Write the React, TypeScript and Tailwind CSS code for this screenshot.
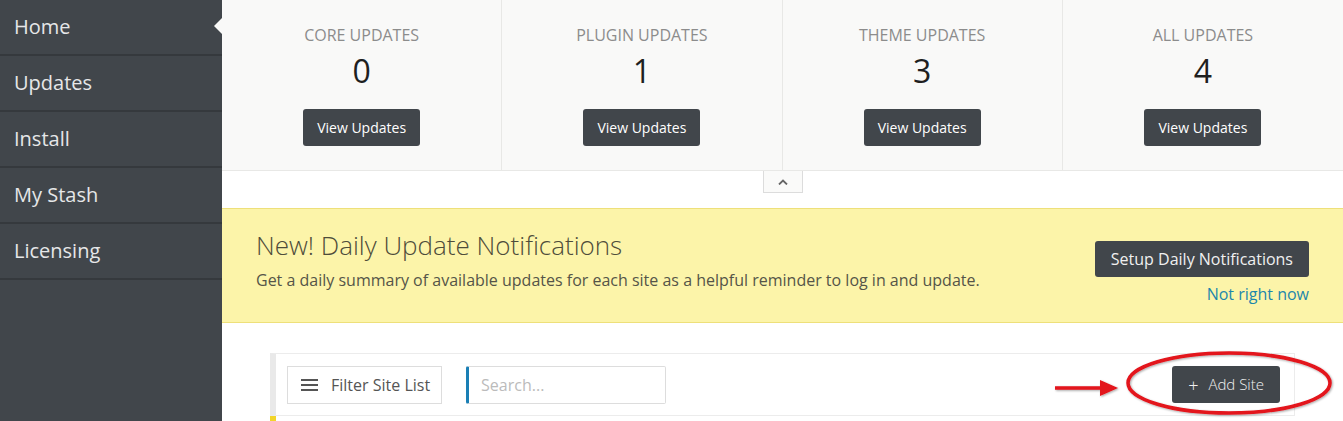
import React from "react";

const stats = [
  { label: "CORE UPDATES", value: "0" },
  { label: "PLUGIN UPDATES", value: "1" },
  { label: "THEME UPDATES", value: "3" },
  { label: "ALL UPDATES", value: "4" },
];

const nav = ["Home", "Updates", "Install", "My Stash", "Licensing"];

export default function App() {
  return (
    <div className="relative flex h-[421px] w-[1343px] overflow-hidden bg-white font-['Open_Sans',sans-serif]">
      {/* Sidebar */}
      <aside className="flex w-[222px] shrink-0 flex-col bg-[#41464b]">
        {nav.map((item, i) => (
          <div
            key={item}
            className="relative flex h-[56px] shrink-0 items-center border-b-2 border-[#35393d] px-[14px] text-[20px] text-[#e6e7e8]"
          >
            {item}
            {i === 0 && (
              <span className="absolute right-0 top-[18px] h-0 w-0 border-y-[8px] border-r-[8px] border-y-transparent border-r-[#f9f9f8]" />
            )}
          </div>
        ))}
      </aside>

      {/* Main */}
      <main className="flex min-w-0 flex-1 flex-col">
        {/* Stats */}
        <div className="grid h-[171px] shrink-0 grid-cols-4 border-b border-[#e8e8e6] bg-[#f9f9f8]">
          {stats.map((s, i) => (
            <div
              key={s.label}
              className={`flex flex-col items-center pt-[24px] ${i < 3 ? "border-r border-[#e8e8e6]" : ""}`}
            >
              <div className="text-[16px] font-medium leading-[22px] text-[#8c8c8c]">{s.label}</div>
              <div className="mt-[5px] text-[32px] font-medium leading-[40px] text-[#1f1f1f]">{s.value}</div>
              <button className="mt-[18px] h-[37px] rounded-[3px] bg-[#41464b] px-[14px] text-[14px] text-white">
                View Updates
              </button>
            </div>
          ))}
        </div>

        {/* Collapse tab */}
        <div className="flex shrink-0 justify-center">
          <div className="flex h-[22px] w-[40px] items-center justify-center border-x border-b border-[#dcdcdc] bg-[#fafaf9]">
            <svg width="10" height="6" viewBox="0 0 10 6">
              <path d="M1 5.5 L5 1.5 L9 5.5" fill="none" stroke="#666" strokeWidth="1.8" />
            </svg>
          </div>
        </div>

        {/* Banner */}
        <div className="mt-[15px] flex h-[115px] shrink-0 justify-between border-y border-[#eee07a] bg-[#fcf4a9] px-[34px]">
          <div className="pt-[19px]">
            <div className="text-[26px] font-light leading-[34px] text-[#4e4c3a]">
              New! Daily Update Notifications
            </div>
            <div className="mt-[7px] text-[16px] leading-[22px] text-[#555448]">
              Get a daily summary of available updates for each site as a helpful reminder to log in and update.
            </div>
          </div>
          <div className="flex flex-col items-end pt-[32px]">
            <button className="h-[36px] rounded-[3px] bg-[#41464b] px-[16px] text-[16px] text-[#f0f0f0]">
              Setup Daily Notifications
            </button>
            <a className="mt-[6px] text-[16px] leading-[22px] text-[#1c87ac]">Not right now</a>
          </div>
        </div>

        {/* Filter bar */}
        <div className="mx-[48px] mt-[30px] flex shrink-0 flex-col">
          <div className="flex h-[63px] items-center border-y border-r border-l-[6px] border-y-[#ececec] border-r-[#ececec] border-l-[#e9e9e9] bg-white pl-[11px] pr-[14px]">
            <button className="flex h-[38px] items-center gap-[13px] border border-[#dddddd] bg-white pl-[13px] pr-[11px] text-[16px] text-[#555]">
              <svg width="17" height="12" viewBox="0 0 17 12">
                <rect x="0" y="0" width="17" height="2" fill="#555" />
                <rect x="0" y="5" width="17" height="2" fill="#555" />
                <rect x="0" y="10" width="17" height="2" fill="#555" />
              </svg>
              Filter Site List
            </button>
            <div className="ml-[24px] flex h-[38px] w-[200px] items-center rounded-[2px] border border-l-[3px] border-[#dddddd] border-l-[#1a7fb5] bg-white pl-[12px] text-[16px] text-[#bbbbbb]">
              Search...
            </div>
            <div className="flex-1" />
            <button className="flex h-[37px] items-center gap-[10px] rounded-[3px] bg-[#41464b] px-[16px] text-[15px] font-light text-[#f0f0f0]">
              <span className="text-[18px] leading-none">+</span>
              <span>Add Site</span>
            </button>
          </div>
          <div className="h-[10px] border-l-[6px] border-l-[#f2d52a]" />
        </div>
      </main>

      {/* Annotation overlay */}
      <svg className="pointer-events-none absolute left-0 top-0" width="1343" height="421" viewBox="0 0 1343 421">
        <defs>
          <filter id="sh" x="-10%" y="-30%" width="120%" height="160%">
            <feDropShadow dx="1" dy="1" stdDeviation="1" floodColor="#000" floodOpacity="0.35" />
          </filter>
        </defs>
        <g filter="url(#sh)">
          <ellipse cx="1229" cy="383" rx="101" ry="30" fill="none" stroke="#e3121a" strokeWidth="3.5" />
          <line x1="1055" y1="388" x2="1102" y2="388" stroke="#e3121a" strokeWidth="3.5" />
          <path d="M1100 380 L1118 388 L1100 396 Z" fill="#e3121a" />
        </g>
      </svg>
    </div>
  );
}
